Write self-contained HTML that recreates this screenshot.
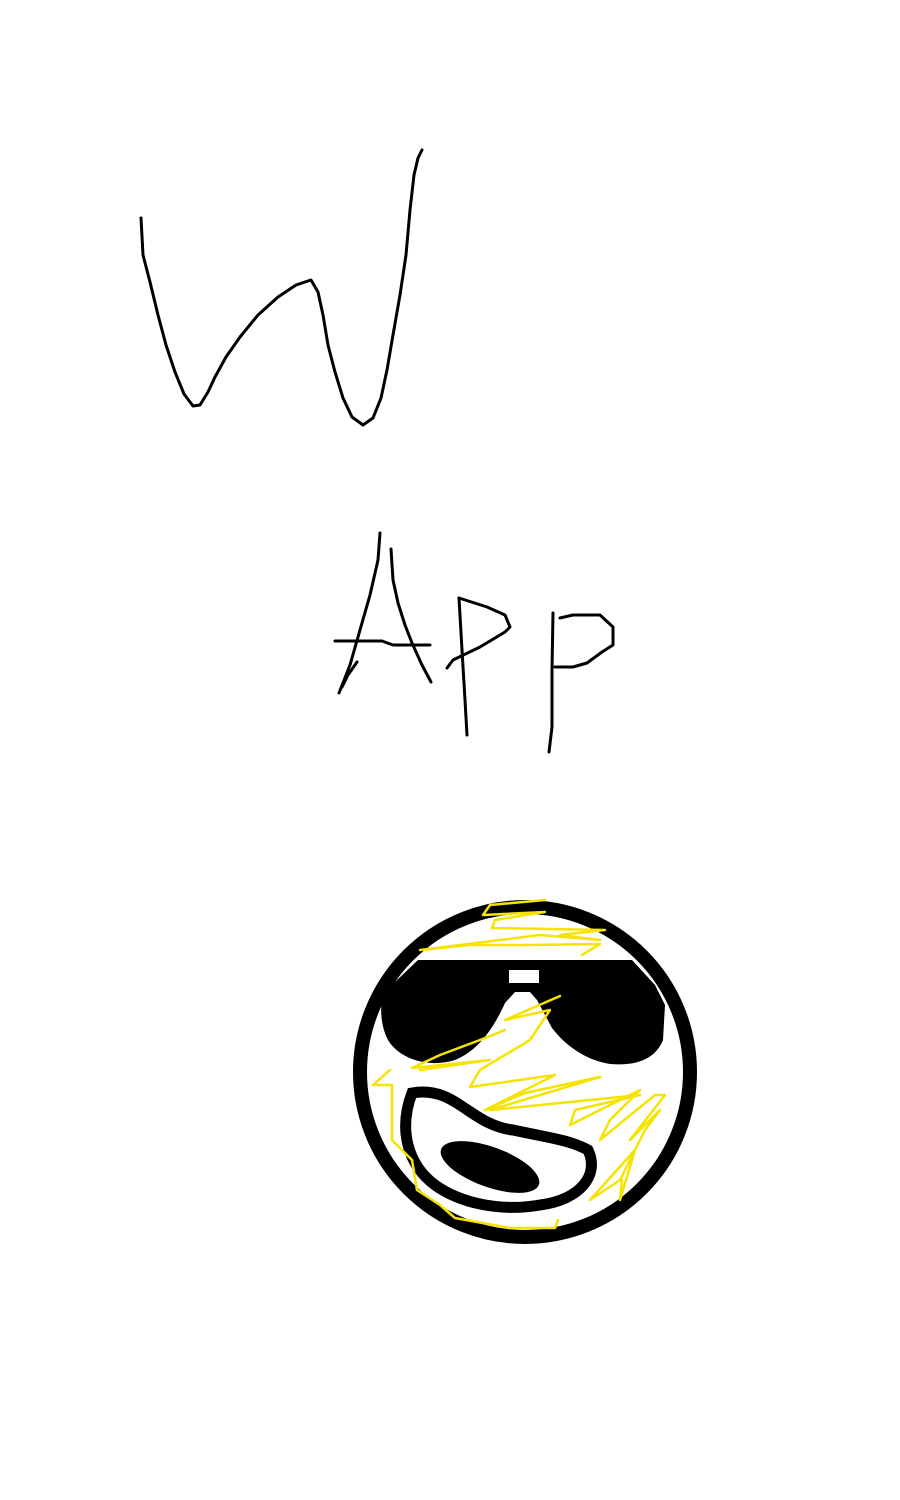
<!DOCTYPE html>
<html><head><meta charset="utf-8"><style>html,body{margin:0;padding:0;background:#fff;width:900px;height:1500px;overflow:hidden}svg{display:block}</style></head>
<body>
<svg width="900" height="1500" viewBox="0 0 900 1500" xmlns="http://www.w3.org/2000/svg">
<g fill="none" stroke="#000" stroke-width="3" stroke-linecap="round" stroke-linejoin="round">
<path d="M141,218 L143,255 L150,282 L158,315 L166,345 L175,372 L184,394 L193,406 L200,405 L208,392 L215,377 L226,357 L240,337 L258,315 L278,297 L296,285 L311,280 L318,292 L323,315 L328,345 L335,372 L343,398 L352,417 L363,425 L373,418 L381,398 L387,370 L393,335 L400,295 L406,255 L410,210 L414,175 L418,158 L422,150"/>
<path d="M380,533 L378,560 L370,595 L360,630 L350,665 L339,693"/>
<path d="M357,662 L348,675 L342,687"/>
<path d="M391,549 L393,580 L398,603 L405,625 L412,643 L422,665 L431,682"/>
<path d="M335,641 L382,641 L393,645 L430,645"/>
<path d="M459,598 L462,650 L465,700 L467,735"/>
<path d="M459,598 L487,607 L505,615 L510,627 L505,632 L480,647 L453,660 L447,668"/>
<path d="M553,613 L552,670 L552,727 L549,752"/>
<path d="M560,618 L573,615 L600,615 L613,627 L613,645 L602,652 L587,663 L573,667 L555,667"/>
</g>
<circle cx="525" cy="1072" r="165" fill="#fff" stroke="#000" stroke-width="14"/>
<path d="M418,960 L632,960 L655,985 L665,1005 L663,1040 C655,1060 635,1066 610,1064 C585,1060 565,1045 552,1028 L537,1000 L530,992 L515,992 L505,1003 C495,1025 480,1050 455,1060 C430,1068 400,1060 388,1040 C380,1025 380,1005 383,995 L395,982 Z" fill="#000"/>
<rect x="509" y="970" width="30" height="13" fill="#fff"/>
<path d="M412,1093 C455,1085 470,1125 513,1130 C550,1138 570,1140 588,1150 C600,1175 580,1200 540,1205 C500,1212 460,1203 435,1185 C408,1165 398,1130 412,1093 Z" fill="#fff" stroke="#000" stroke-width="11"/>
<ellipse cx="490" cy="1167" rx="52" ry="20" transform="rotate(20 490 1167)" fill="#000"/>
<g fill="none" stroke="#f5e400" stroke-width="2.5" stroke-linejoin="round" stroke-linecap="round">
<path d="M545,900 L490,905 L483,915 L545,912 L495,920 L492,928 L605,930 L560,935 L600,940 L540,935 L420,950 L470,945 L530,945 L600,944 L582,955"/>
<path d="M560,996 L505,1020 L550,1010 L530,1040 L480,1070 L470,1087 L555,1075 L485,1110 L525,1093 L600,1077 L490,1110 L640,1095 L575,1110 L570,1125 L640,1090 L610,1120 L600,1140 L655,1095 L665,1095 L630,1140 L660,1110 L645,1130 L620,1180 L590,1200 L635,1150 L620,1200 L622,1180"/>
<path d="M505,1030 L480,1040 L440,1055 L412,1068 L490,1060 L420,1070"/>
<path d="M390,1070 L373,1085 L392,1085 L392,1140 L412,1160 L417,1190 L440,1205 L455,1218 L510,1228 L555,1228 L558,1220"/>
</g>
</svg>
</body></html>
